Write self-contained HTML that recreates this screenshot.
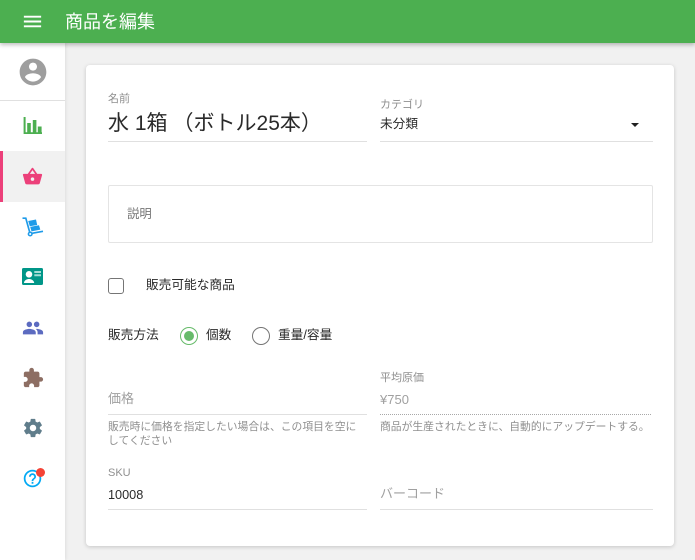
<!DOCTYPE html>
<html lang="ja">
<head>
<meta charset="utf-8">
<title>商品を編集</title>
<style>
html,body{margin:0;padding:0;width:695px;height:560px;overflow:hidden;background:#f1f1f1;}
body{position:relative;font-family:"Liberation Sans","Noto Sans CJK JP",sans-serif;color:#212121;}
.a{position:absolute;white-space:nowrap;line-height:1;}
svg{position:absolute;display:block;}
#hdr{position:absolute;left:0;top:0;width:695px;height:43px;background:#4caf50;box-shadow:0 2px 4px rgba(0,0,0,.25);z-index:3;}
#side{position:absolute;left:0;top:0;width:65px;height:560px;background:#fff;box-shadow:1px 0 3px rgba(0,0,0,.08);z-index:2;}
#card{position:absolute;left:86px;top:65px;width:588px;height:481px;background:#fff;border-radius:4px;box-shadow:0 1px 4px rgba(0,0,0,.18);}
.line{position:absolute;height:1px;background:#e0e0e0;}
.lbl{color:#8f8f8f;font-size:11px;}
.hint{color:#8f8f8f;font-size:10.8px;}
.ph{color:#a0a0a0;font-size:13px;}
.t{color:#2a2a2a;font-size:12.7px;}
</style>
</head>
<body>
<div id="side">
  <svg style="left:16.500px;top:56px" width="32" height="32" viewBox="0 0 24 24"><path fill="#9e9e9e" d="M12 2C6.480 2 2 6.480 2 12s4.480 10 10 10 10-4.480 10-10S17.520 2 12 2zm0 3c1.660 0 3 1.340 3 3s-1.340 3-3 3-3-1.340-3-3 1.340-3 3-3zm0 14.200c-2.500 0-4.710-1.280-6-3.220.03-1.990 4-3.080 6-3.080 1.990 0 5.970 1.090 6 3.080-1.290 1.940-3.500 3.220-6 3.220z"/></svg>
  <div class="line" style="left:0;top:100px;width:65px;"></div>
  <div style="position:absolute;left:0;top:151px;width:65px;height:51px;background:#f1f1f1;"></div>
  <div style="position:absolute;left:0;top:151px;width:3px;height:51px;background:#ec407a;"></div>

  <svg style="left:23px;top:117px" width="20" height="18" viewBox="0 0 20 18"><path fill="#4caf50" d="M.6 0h2v15.200H19V17H.6zM4.200 6h3.600v9.500H4.200zM9.800 3h3.600v12.500H9.800zM14.800 9.500h3.800v6h-3.800z"/></svg>

  <svg style="left:22px;top:166px" width="21" height="21" viewBox="0 0 24 24"><path fill="#ec407a" d="M5.500 21C4.720 21 4.040 20.550 3.710 19.900L1.100 10.440L1 10A1 1 0 0 1 2 9H6.580L11.180 2.430C11.360 2.170 11.660 2 12 2C12.340 2 12.650 2.170 12.830 2.440L17.420 9H22A1 1 0 0 1 23 10L22.960 10.290L20.290 19.900C19.960 20.550 19.280 21 18.500 21H5.500M12 4.740L9 9H15L12 4.740M12 13A2 2 0 0 0 10 15A2 2 0 0 0 12 17A2 2 0 0 0 14 15A2 2 0 0 0 12 13Z"/></svg>

  <svg style="left:22px;top:217px" width="22" height="20" viewBox="0 0 22 20"><path fill="none" stroke="#1e9be9" stroke-width="1.700" d="M.5 1.200H3.800L7.600 14.800M9.800 16.300L21 14.300"/><circle cx="8.200" cy="17" r="1.800" fill="none" stroke="#1e9be9" stroke-width="1.500"/><path fill="#1e9be9" d="M6.200 4L14 2.500L15.200 8L7.800 9.300zM8.200 9.900L17 8.200L18.300 12.600L9.500 14.400z"/></svg>

  <svg style="left:22px;top:268px" width="21" height="17" viewBox="0 0 21 17"><rect width="21" height="17" rx="1.500" fill="#009688"/><circle cx="7" cy="6.300" r="3.300" fill="#fff"/><path fill="#fff" d="M2 15c0-2.800 3-4 5-4s5 1.200 5.200 4z"/><path fill="#a5dcd6" d="M12.300 3h6.700v2h-6.700zM12.300 6.300h6.700v2h-6.700z"/></svg>

  <svg style="left:22px;top:317px" width="22" height="22" viewBox="0 0 24 24"><path fill="#5c6bc0" d="M16 11c1.660 0 2.990-1.340 2.990-3S17.660 5 16 5c-1.660 0-3 1.340-3 3s1.340 3 3 3zm-8 0c1.660 0 2.990-1.340 2.990-3S9.660 5 8 5C6.340 5 5 6.340 5 8s1.340 3 3 3zm0 2c-2.330 0-7 1.170-7 3.500V19h14v-2.500c0-2.330-4.670-3.500-7-3.500zm8 0c-.29 0-.62.02-.97.05 1.160.84 1.970 1.970 1.970 3.450V19h6v-2.500c0-2.330-4.670-3.500-7-3.500z"/></svg>

  <svg style="left:22px;top:367px" width="22" height="22" viewBox="0 0 24 24"><path fill="#8d6e63" d="M20.500 11H19V7c0-1.100-.9-2-2-2h-4V3.500C13 2.120 11.880 1 10.500 1S8 2.120 8 3.500V5H4c-1.100 0-1.990.9-1.990 2v3.800H3.500c1.490 0 2.700 1.210 2.700 2.700s-1.210 2.700-2.700 2.700H2V20c0 1.100.9 2 2 2h3.800v-1.500c0-1.490 1.210-2.700 2.700-2.700 1.490 0 2.700 1.210 2.700 2.700V22H17c1.100 0 2-.9 2-2v-4h1.500c1.380 0 2.500-1.120 2.500-2.500S21.880 11 20.500 11z"/></svg>

  <svg style="left:22px;top:417px" width="22" height="22" viewBox="0 0 24 24"><path fill="#607d8b" d="M19.430 12.980c.04-.32.07-.64.07-.98s-.03-.66-.07-.98l2.110-1.650c.19-.15.24-.42.12-.64l-2-3.460c-.12-.22-.39-.3-.61-.22l-2.490 1c-.52-.4-1.080-.73-1.690-.98l-.38-2.650C14.460 2.180 14.250 2 14 2h-4c-.25 0-.46.18-.49.42l-.38 2.650c-.61.25-1.170.59-1.690.98l-2.490-1c-.23-.09-.49 0-.61.22l-2 3.460c-.13.22-.07.49.12.64l2.110 1.650c-.04.32-.07.65-.07.98s.03.66.07.98l-2.110 1.650c-.19.15-.24.42-.12.64l2 3.460c.12.22.39.3.61.22l2.490-1c.52.4 1.080.73 1.690.98l.38 2.650c.03.24.24.42.49.42h4c.25 0 .46-.18.49-.42l.38-2.650c.61-.25 1.170-.59 1.690-.98l2.490 1c.23.09.49 0 .61-.22l2-3.460c.12-.22.07-.49-.12-.64l-2.110-1.650zM12 15.500c-1.930 0-3.500-1.570-3.500-3.500s1.570-3.500 3.500-3.500 3.500 1.570 3.500 3.500-1.570 3.500-3.500 3.500z"/></svg>

  <svg style="left:22px;top:468px" width="21" height="21" viewBox="0 0 24 24"><path fill="#03a9f4" d="M11 18h2v-2h-2v2zm1-16C6.480 2 2 6.480 2 12s4.480 10 10 10 10-4.480 10-10S17.520 2 12 2zm0 18c-4.410 0-8-3.590-8-8s3.590-8 8-8 8 3.590 8 8-3.590 8-8 8zm0-14c-2.210 0-4 1.790-4 4h2c0-1.100.9-2 2-2s2 .9 2 2c0 2-3 1.750-3 5h2c0-2.250 3-2.500 3-5 0-2.210-1.790-4-4-4z"/></svg>
  <div style="position:absolute;left:36px;top:468px;width:9px;height:9px;border-radius:50%;background:#f44336;"></div>
</div>

<div id="hdr">
  <svg style="left:21px;top:10px" width="23" height="23" viewBox="0 0 24 24"><path fill="#fff" d="M3 18h18v-2H3v2zm0-5h18v-2H3v2zm0-7v2h18V6H3z"/></svg>
  <div class="a" style="left:65px;top:13px;font-size:18px;color:#fff;">商品を編集</div>
</div>

<div id="card"></div>

<div class="a lbl" style="left:108px;top:94px;">名前</div>
<div class="a" style="left:108px;top:113px;font-size:21px;color:#2a2a2a;">水 1<span style="letter-spacing:5px">箱</span>（ボトル25本）</div>
<div class="line" style="left:108px;top:141px;width:259px;"></div>

<div class="a lbl" style="left:380px;top:100px;">カテゴリ</div>
<div class="a t" style="left:380px;top:118px;">未分類</div>
<div style="position:absolute;left:631px;top:123px;width:0;height:0;border-left:4.500px solid transparent;border-right:4.500px solid transparent;border-top:4.500px solid #212121;"></div>
<div class="line" style="left:380px;top:141px;width:273px;"></div>

<div style="position:absolute;left:108px;top:185px;width:543px;height:56px;border:1px solid #e4e4e4;border-radius:2px;"></div>
<div class="a" style="left:127px;top:208px;font-size:12.400px;color:#757575;">説明</div>

<div style="position:absolute;left:108px;top:278px;width:14px;height:14px;border:1.500px solid #757575;border-radius:3px;"></div>
<div class="a t" style="left:146px;top:279px;">販売可能な商品</div>

<div class="a t" style="left:108px;top:329px;">販売方法</div>
<div style="position:absolute;left:180px;top:327px;width:16px;height:16px;border:1px solid #66bb6a;border-radius:50%;"></div>
<div style="position:absolute;left:184px;top:331px;width:10px;height:10px;background:#66bb6a;border-radius:50%;"></div>
<div class="a t" style="left:206px;top:329px;">個数</div>
<div style="position:absolute;left:252px;top:327px;width:16px;height:16px;border:1px solid #757575;border-radius:50%;"></div>
<div class="a t" style="left:278px;top:329px;">重量/容量</div>

<div class="a ph" style="left:108px;top:392px;">価格</div>
<div class="line" style="left:108px;top:414px;width:259px;"></div>
<div class="a hint" style="left:108px;top:422px;">販売時に価格を指定したい場合は、この項目を空に</div>
<div class="a hint" style="left:108px;top:436px;">してください</div>

<div class="a lbl" style="left:380px;top:372.500px;">平均原価</div>
<div class="a ph" style="left:380px;top:393px;">¥750</div>
<div style="position:absolute;left:380px;top:414px;width:271px;border-top:1px dotted #a8a8a8;"></div>
<div class="a hint" style="left:380px;top:422px;">商品が生産されたときに、自動的にアップデートする。</div>

<div class="a lbl" style="left:108px;top:467.500px;">SKU</div>
<div class="a t" style="left:108px;top:488.500px;">10008</div>
<div class="line" style="left:108px;top:509px;width:259px;"></div>

<div class="a ph" style="left:380px;top:487px;">バーコード</div>
<div class="line" style="left:380px;top:509px;width:273px;"></div>
</body>
</html>
